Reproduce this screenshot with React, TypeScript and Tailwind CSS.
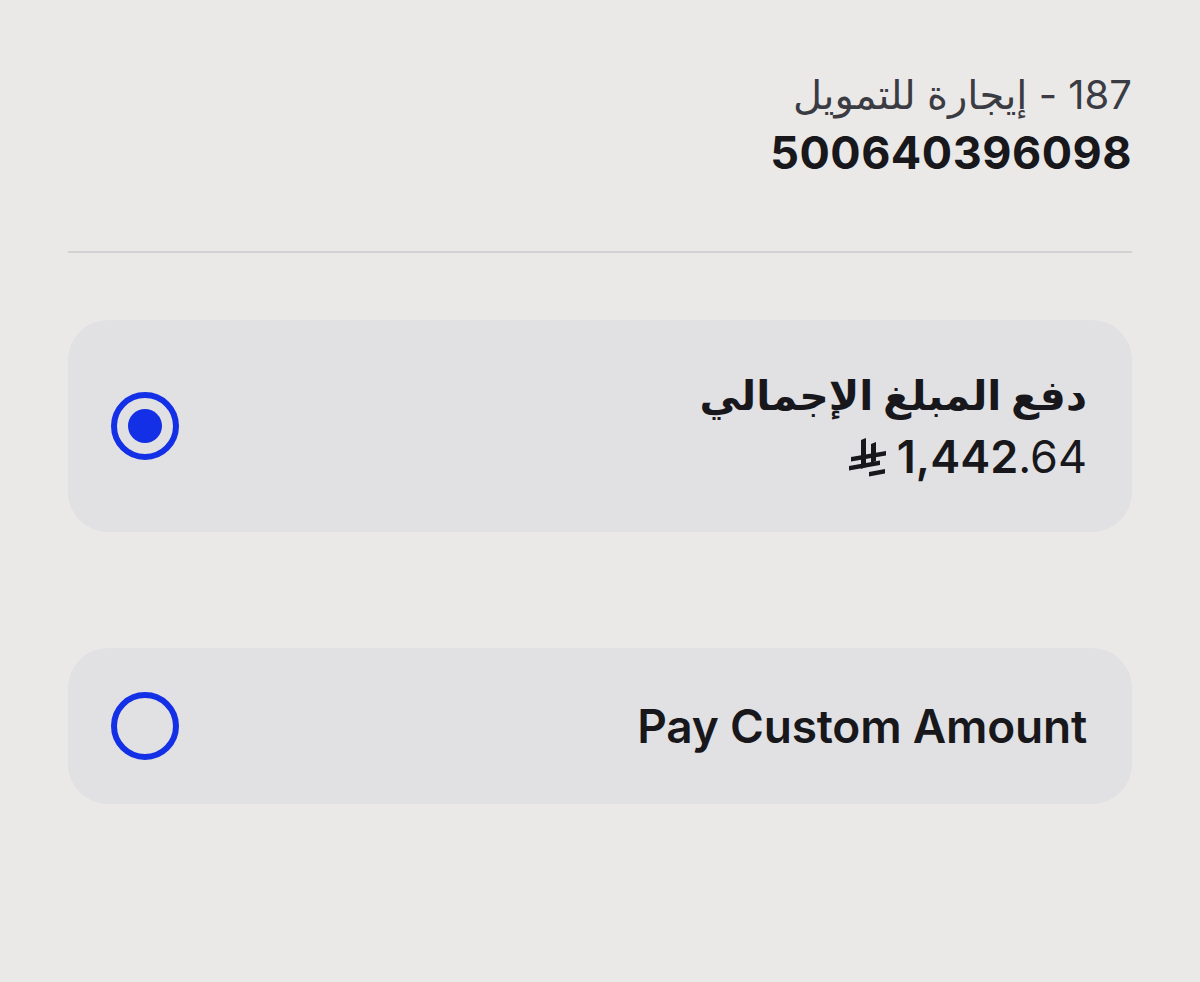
import React, { useState } from 'react';

const RiyalSign = ({ className }: { className?: string }) => (
  <svg viewBox="0 0 38 40" className={className} fill="currentColor">
    <path d="M12 3 L17 1 L17 30 L12 32 Z" />
    <path d="M22 7 L27 5 L27 24 L22 26 Z" />
    <path d="M2 20 L37 14 L37 18.5 L2 24.5 Z" />
    <path d="M0 29 L31 23.5 L31 28 L0 33.5 Z" />
    <path d="M20 35 L36 32 L36 36.5 L20 39.5 Z" />
  </svg>
);

const Radio = ({ checked }: { checked: boolean }) => (
  <div className="w-[68px] h-[68px] rounded-full border-[6px] border-[#1430e6] flex items-center justify-center shrink-0">
    {checked && <div className="w-[34px] h-[34px] rounded-full bg-[#1430e6]" />}
  </div>
);

export default function App() {
  const [selected, setSelected] = useState<'full' | 'custom'>('full');

  return (
    <div
      className="min-h-[982px] w-full bg-[#eae9e7] px-[68px] pt-[70px]"
      style={{ fontFamily: 'Inter, "DejaVu Sans", sans-serif' }}
    >
      <div className="flex flex-col items-end text-right">
        <div dir="rtl" className="text-[40px] leading-[50px] text-[#3b3b44]">
          187 - إيجارة للتمويل
        </div>
        <div className="mt-[4px] text-[45px] leading-[58px] font-bold text-[#18181c] tracking-[0.5px]">500640396098</div>
      </div>

      <div className="mt-[69px] h-[2px] bg-[#d2d1d4]" />

      <button
        onClick={() => setSelected('full')}
        className="mt-[67px] w-full h-[212px] rounded-[40px] bg-[#e1e1e3] flex items-center justify-between pl-[43px] pr-[45px]"
      >
        <Radio checked={selected === 'full'} />
        <div className="flex flex-col items-end text-[#18181c]">
          <div dir="rtl" className="text-[41px] leading-[56px] font-bold">دفع المبلغ الإجمالي</div>
          <div className="mt-[6px] flex items-center gap-[10px] text-[45px] leading-[56px]">
            <RiyalSign className="w-[38px] h-[40px]" />
            <span>
              <span className="font-semibold">1,442</span>
              <span>.64</span>
            </span>
          </div>
        </div>
      </button>

      <button
        onClick={() => setSelected('custom')}
        className="mt-[116px] w-full h-[156px] rounded-[40px] bg-[#e1e1e3] flex items-center justify-between pl-[43px] pr-[45px]"
      >
        <Radio checked={selected === 'custom'} />
        <div className="text-[46px] leading-[56px] font-semibold text-[#18181c] tracking-[-0.2px]">Pay Custom Amount</div>
      </button>
    </div>
  );
}
